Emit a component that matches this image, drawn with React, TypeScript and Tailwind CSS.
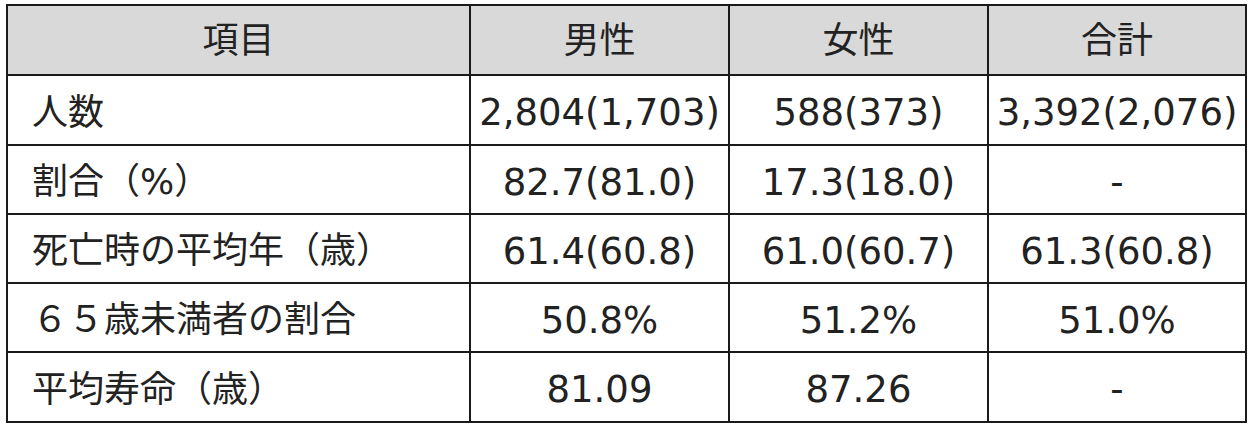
const rows: { label: string; male: string; female: string; total: string }[] = [
  { label: "人数", male: "2,804(1,703)", female: "588(373)", total: "3,392(2,076)" },
  { label: "割合（%）", male: "82.7(81.0)", female: "17.3(18.0)", total: "-" },
  { label: "死亡時の平均年（歳）", male: "61.4(60.8)", female: "61.0(60.7)", total: "61.3(60.8)" },
  { label: "６５歳未満者の割合", male: "50.8%", female: "51.2%", total: "51.0%" },
  { label: "平均寿命（歳）", male: "81.09", female: "87.26", total: "-" },
];

const heights = ["h-[70px]", "h-[69px]", "h-[69px]", "h-[69px]", "h-[70px]"];

export default function App() {
  return (
    <div className="bg-white w-[1258px] h-[426px] pt-[4px] pl-[6px] text-[#222] font-['DejaVu_Sans','Noto_Sans_CJK_JP',sans-serif] text-[36px] leading-none">
      <table className="table-fixed border-collapse border-2 border-[#1a1a1a] w-[1241px]">
        <thead>
          <tr className="h-[70px] bg-[#d9d9d9]">
            <th className="w-[463px] border-2 border-[#1a1a1a] font-normal text-center p-0 pt-[2px]">項目</th>
            <th className="w-[259px] border-2 border-[#1a1a1a] font-normal text-center p-0 pt-[2px]">男性</th>
            <th className="w-[259px] border-2 border-[#1a1a1a] font-normal text-center p-0 pt-[2px]">女性</th>
            <th className="w-[258px] border-2 border-[#1a1a1a] font-normal text-center p-0 pt-[2px]">合計</th>
          </tr>
        </thead>
        <tbody>
          {rows.map((r, i) => (
            <tr key={r.label} className={heights[i]}>
              <td className="border-2 border-[#1a1a1a] pl-[24px] pr-0 pt-[5px] pb-0 whitespace-nowrap">{r.label}</td>
              <td className="border-2 border-[#1a1a1a] text-center text-[37px] p-0 pt-[5px] whitespace-nowrap">{r.male}</td>
              <td className="border-2 border-[#1a1a1a] text-center text-[37px] p-0 pt-[5px] whitespace-nowrap">{r.female}</td>
              <td className="border-2 border-[#1a1a1a] text-center text-[37px] p-0 pt-[5px] whitespace-nowrap">{r.total}</td>
            </tr>
          ))}
        </tbody>
      </table>
    </div>
  );
}
